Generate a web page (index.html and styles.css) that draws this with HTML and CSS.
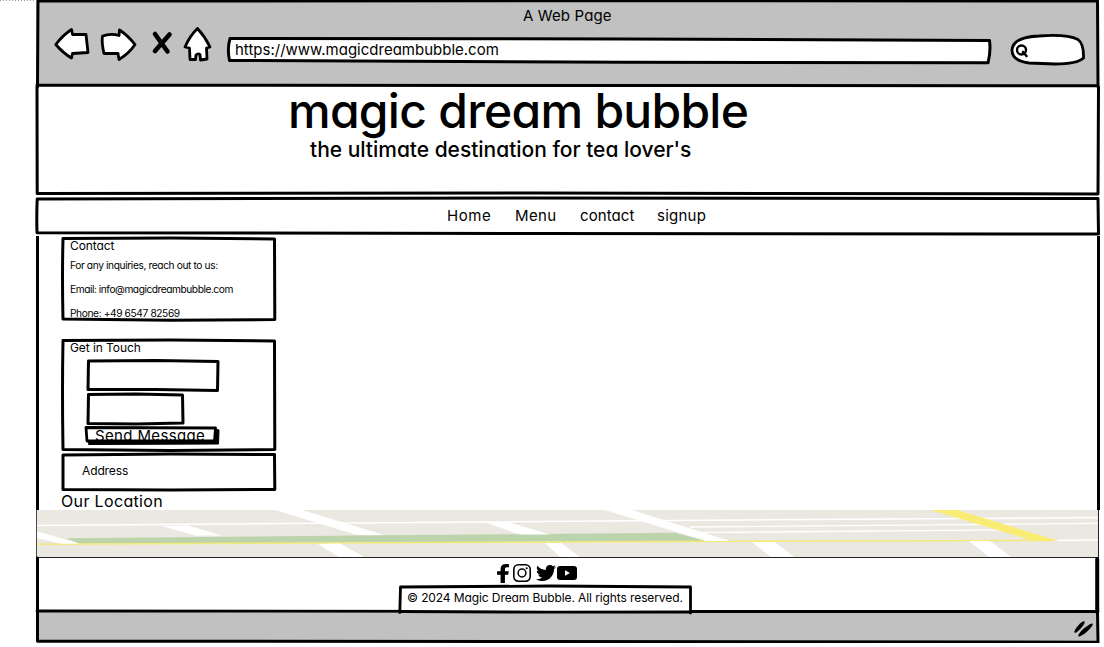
FILE: index.html
```html
<!DOCTYPE html>
<html lang="en">
<head>
<meta charset="utf-8">
<title>magic dream bubble</title>
<link rel="stylesheet" href="styles.css">
</head>
<body>
<div class="window">
  <svg class="dots" width="36" height="2"><path d="M0 .5H36" /></svg>

  <div class="chrome">
    <svg class="ink" viewBox="0 0 1064 87" preserveAspectRatio="none"><path d="M1.500 87L2 1L700 .8L1061.500 1L1062 87M1 85.200L500 85.500L1062 85.700" stroke-width="3"/></svg>
    <div class="page-title">A Web Page</div>
    <div class="tools">
      <svg class="nav-icons" width="158" height="38" viewBox="0 0 158 38">
        <g fill="#fff" stroke="#000" stroke-width="2.800" stroke-linejoin="round">
          <path d="M1.800 18.500Q9 9 17.500 3.500L18.500 8.500L32 8.500L34 26.500L18.500 27.500L17.500 32Q9 27 1.800 18.500Z"/>
          <path d="M48.500 10Q57 7 65 9.500L65.500 4Q74 9.500 81 18.500Q75 27.500 65 33.500L64 27.500L50 27.500Q47.500 17 48.500 10Z"/>
          <path d="M143.500 2.500Q151 10.500 156 21L152.500 22L153 33L146.500 34L146 28.500Q144 27 142 29L141.500 33.500L136 33.500L135.500 22L131 21Q136 9.500 143.500 2.500Z"/>
        </g>
        <path d="M101 8L113.500 25.500M115.500 8.500L101 25" stroke="#000" stroke-width="4.600" stroke-linecap="round"/>
      </svg>
      <div class="url">
        <svg class="ink" viewBox="0 0 766 30" preserveAspectRatio="none"><path d="M4 2.500Q1 13 3.500 24.500L400 26.200L762 26.800Q765 15 763.500 4.500L400 3L4 2.500Z" fill="#fff" stroke-width="3"/></svg>
        <span>https://www.magicdreambubble.com</span>
      </div>
      <svg class="search" width="78" height="34" viewBox="0 0 78 34">
        <path d="M3 17Q4 4 30 3Q58 1 69 6.500Q75 11 74.500 25Q68 31 46 31L20 30Q3 28 3 17Z" fill="#fff" stroke="#000" stroke-width="2.800"/>
        <circle cx="12.500" cy="17" r="4.500" fill="none" stroke="#000" stroke-width="2.400"/><path d="M14 19L17.500 23" stroke="#000" stroke-width="2.600" stroke-linecap="round"/>
      </svg>
    </div>
  </div>

  <header class="masthead">
    <svg class="ink" viewBox="0 0 1064 110" preserveAspectRatio="none"><path d="M1 0L1.200 106.500L500 106L1062 107L1062.500 0" stroke-width="3"/></svg>
    <h1>magic dream bubble</h1>
    <p>the ultimate destination for tea lover's</p>
  </header>

  <nav class="menu">
    <svg class="ink" viewBox="0 0 1064 39" preserveAspectRatio="none"><path d="M1.200 2Q.5 18 1 35.800L500 36.500L1062.500 37L1062 1.500L500 1Z" stroke-width="3"/></svg>
    <a class="m-home">Home</a><a class="m-menu">Menu</a><a class="m-contact">contact</a><a class="m-signup">signup</a>
  </nav>

  <main class="content">
    <section class="box contact">
      <svg class="ink" viewBox="0 0 215 85" preserveAspectRatio="none"><path d="M2 1.500L110 1L213.500 2L213.800 82.500L110 83.200L2 82Q1 40 2 1.500Z" stroke-width="3"/></svg>
      <h2>Contact</h2>
      <p>For any inquiries, reach out to us:</p>
      <p class="mail">Email: info@magicdreambubble.com</p>
      <p>Phone: +49 6547 82569</p>
    </section>
    <section class="box touch">
      <svg class="ink" viewBox="0 0 215 112" preserveAspectRatio="none"><path d="M2 1.500L110 1L213.500 2L213.800 110.500L110 111.500L2 110.500Q1 50 2 1.500Z" stroke-width="3"/></svg>
      <h2>Get in Touch</h2>
      <div class="field wide"><svg class="ink" viewBox="0 0 134 33" preserveAspectRatio="none"><path d="M2.500 2L70 1.500L132 2.500L131.500 31.500L70 30.500L2 30.500Z" stroke-width="3"/></svg></div>
      <div class="field short"><svg class="ink" viewBox="0 0 99 33" preserveAspectRatio="none"><path d="M2.500 2.500L50 2L96.500 3L97 31L50 32L2 31.500Z" stroke-width="3"/></svg></div>
      <div class="send">
        <svg class="ink" viewBox="0 0 136 20" preserveAspectRatio="none"><path d="M4 19.500L133.500 19L134 5L130 4V16.500H4Z" fill="#000" stroke-width="1"/><path d="M1 2.500L130.500 3L129.500 16L2 16Z" fill="#fff" stroke-width="2.800"/></svg>
        <div class="send-label">Send Message</div>
      </div>
    </section>
    <section class="box address">
      <svg class="ink" viewBox="0 0 215 39" preserveAspectRatio="none"><path d="M2 3L110 2L213.500 2.500L213.800 37.500L110 38L2 37.500Z" stroke-width="3"/></svg>
      <p>Address</p>
    </section>
    <h2 class="loc">Our Location</h2>
  </main>

  <svg class="map" width="1063" height="48" viewBox="36 510 1063 48">
    <path d="M36 510H1098V557H36Z" fill="#ebe8e2"/>
    <g stroke="#fff" fill="none"><path d="M36 525.500L390 522.800L740 520L1098 517.600" stroke-width="1.500"/><path d="M690 527L1098 523.300M695 532.600L1010 529.800M1050 540.500L1098 540" stroke-width="1.300"/></g>
    <path fill="#bcd4ac" d="M66 538.300L380 535.300L675 532.800L707 541L380 542.300L80 543.700Z"/>
    <path d="M36 544.300L380 542.700L740 541.300L1050 540.500" fill="none" stroke="#f4ea7a" stroke-width="1.500"/>
    <path fill="#fff" d="M275 510H302L384 535H357ZM36 531L79 543.500L61 543.700L36 538ZM162 526L188 525.500L222 535.500H195ZM318 544L340 543.500L364 557H339ZM485 522.500L508 522L550 534.500H520ZM605 510H632L730 541H706ZM545 543H561L580 557H560ZM752 542H775L794 557H771ZM969 541H990L1011 557H989Z"/>
    <path fill="#f9ec72" d="M931 510H957L1059 541H1034Z"/>
    <path d="M36.300 510V557.500H1098.500V510" fill="none" stroke="#222" stroke-width="1"/>
  </svg>

  <footer class="foot">
    <svg class="ink" viewBox="0 0 1064 54" preserveAspectRatio="none"><path d="M1.500 0V54" stroke-width="3"/><path d="M1061.200 1V54" stroke-width="4"/><path d="M1 53L500 53.500L1062 53.500" stroke-width="2.800"/></svg>
    <div class="social">
      <svg width="12" height="19" viewBox="22 0 276 512" preserveAspectRatio="none"><path d="M279.140 288l14.220-92.660h-88.910v-60.130c0-25.350 12.420-50.060 52.240-50.060h40.420V6.260S260.430 0 225.360 0c-73.220 0-121.080 44.380-121.080 124.720v70.620H22.890V288h81.390v224h100.170V288z"/></svg>
      <svg width="18" height="18" viewBox="0 0 18 18"><g fill="none" stroke="#000"><rect x=".8" y=".8" width="16.400" height="16.400" rx="4.600" stroke-width="1.600"/><circle cx="9" cy="9" r="3.900" stroke-width="1.500"/></g><circle cx="13.700" cy="4.300" r="1.050"/></svg>
      <svg class="bird" width="20" height="16" viewBox="0 48 512 416" preserveAspectRatio="none"><path d="M459.370 151.716c.325 4.548.325 9.097.325 13.645 0 138.720-105.583 298.558-298.558 298.558-59.452 0-114.680-17.219-161.137-47.106 8.447.974 16.568 1.299 25.340 1.299 49.055 0 94.213-16.568 130.274-44.832-46.132-.975-84.792-31.188-98.112-72.772 6.498.974 12.995 1.624 19.818 1.624 9.421 0 18.843-1.300 27.614-3.573-48.081-9.747-84.143-51.980-84.143-102.985v-1.299c13.969 7.797 30.214 12.670 47.431 13.319-28.264-18.843-46.781-51.005-46.781-87.391 0-19.492 5.197-37.360 14.294-52.954 51.655 63.675 129.300 105.258 216.365 109.807-1.624-7.797-2.599-15.918-2.599-24.040 0-57.828 46.782-104.934 104.934-104.934 30.213 0 57.502 12.670 76.670 33.137 23.715-4.548 46.456-13.320 66.599-25.340-7.798 24.366-24.366 44.833-46.132 57.827 21.117-2.273 41.584-8.122 60.426-16.243-14.292 20.791-32.161 39.308-52.628 54.253z"/></svg>
      <svg width="20" height="14" viewBox="0 0 19 14" preserveAspectRatio="none"><rect width="19" height="14" rx="3"/><path d="M7.600 4.200L12.300 7L7.600 9.800Z" fill="#fff"/></svg>
    </div>
    <div class="copy">
      <svg class="ink" viewBox="0 0 294 29" preserveAspectRatio="none"><path d="M.8 27.500L1.500 2L150 1L291.500 2L291.500 28" fill="#fff" stroke-width="2.800"/><path d="M2 26.500L150 27.200L292 27" stroke-width="2.800"/></svg>
      <span>© 2024 Magic Dream Bubble. All rights reserved.</span>
    </div>
  </footer>

  <div class="status">
    <svg class="ink" viewBox="0 0 1064 31" preserveAspectRatio="none"><path d="M1.500 0L1.500 29.200L500 29.500L1062 30.200L1061.500 0" stroke-width="3"/></svg>
    <svg class="grip" width="20" height="17" viewBox="0 0 20 17"><g><ellipse cx="6.500" cy="7" rx="7.500" ry="2" transform="rotate(-48 6.500 7)"/><ellipse cx="12.500" cy="10" rx="9.400" ry="2.200" transform="rotate(-41 12.500 10)"/></g></svg>
  </div>
</div>
</body>
</html>
```
FILE: styles.css
```css
* { box-sizing: border-box; margin: 0; padding: 0; }
body {
  background: #fff;
  color: #000;
  font-family: Inter, "Open Sans", sans-serif;
  font-weight: 400;
  font-feature-settings: "cv11" 1;
  white-space: nowrap;
  overflow: hidden;
}
h1, h2 { font-weight: inherit; }

.window { position: relative; width: 1064px; margin-left: 36px; }
.window > * { position: relative; }
.window > .dots { position: absolute; left: -36px; top: 0; }
.dots path { stroke: #999; stroke-width: 1; stroke-dasharray: 1 2; }

/* Hand-drawn outlines sit behind the content of each box. */
.ink {
  position: absolute; left: 0; top: 0; width: 100%; height: 100%;
  overflow: visible; fill: none; stroke: #000; stroke-linejoin: round; stroke-linecap: round;
}
.ink ~ * { position: relative; }

.chrome { height: 87px; background: linear-gradient(#c1c1c1, #c1c1c1) 0 0 / 1062px 86px no-repeat; }
.page-title { height: 26px; padding: 6px 0 0 487px; font-size: 15px; line-height: 20px; letter-spacing: .13px; }
.tools { display: flex; align-items: flex-start; padding-left: 18px; }
.nav-icons { margin-right: 14px; }
.url { position: relative; width: 766px; height: 30px; margin: 10px 17px 0 0; padding-left: 9px; font-size: 15px; line-height: 27px; }
.search { margin-top: 7px; }

.masthead { height: 110px; }
.masthead h1 { height: 46px; padding-left: 252px; font-size: 48px; line-height: 48px; font-weight: 500; letter-spacing: -.74px; }
.masthead p { padding-left: 274px; font-size: 21px; font-weight: 500; line-height: 34px; letter-spacing: -.02px; }

.menu { display: flex; height: 39px; padding-left: 411px; font-size: 15px; line-height: 37px; }
.m-home { width: 68px; letter-spacing: .6px; }
.m-menu { width: 65px; letter-spacing: .35px; }
.m-contact { width: 77px; letter-spacing: .08px; }
.m-signup { letter-spacing: .25px; }

.content { height: 274px; padding: 1px 0 0 22px; border-left: 3px solid #000; border-right: 3px solid #000; }
.box { position: relative; width: 215px; }
.box h2 { padding-left: 9px; font-size: 12px; line-height: 17px; letter-spacing: -.08px; }
.contact { height: 85px; margin-bottom: 17px; }
.contact h2 { height: 16px; }
.contact p { padding-left: 9px; font-size: 10.2px; line-height: 24px; letter-spacing: -.39px; }
.contact .mail { letter-spacing: -.46px; }
.touch { height: 112px; margin-bottom: 1px; }
.field { height: 33px; margin-left: 25px; }
.wide { width: 134px; margin-top: 3px; }
.short { width: 99px; }
.send { width: 136px; height: 20px; margin-left: 24px; }
.send-label { height: 15px; padding-left: 10px; overflow: hidden; font-size: 15px; line-height: 21px; letter-spacing: .36px; }
.address { height: 39px; }
.address p { padding-left: 21px; font-size: 12px; line-height: 37px; letter-spacing: -.12px; }
.loc { font-size: 16px; line-height: 20px; letter-spacing: .34px; }

.map { display: block; }
.foot { height: 54px; z-index: 1; }
.social { display: flex; align-items: center; gap: 4px; height: 27px; padding: 3px 0 0 461px; }
.bird { margin: 0 -3px 0 1px; }
.copy { width: 294px; height: 29px; margin-left: 363px; padding-left: 8px; font-size: 12px; line-height: 25px; letter-spacing: -.1px; }
.status { display: flex; align-items: flex-start; height: 31px; padding: 8px 0 0 1037px; background: linear-gradient(#c1c1c1, #c1c1c1) 0 0 / 1062px 30px no-repeat; }
```
